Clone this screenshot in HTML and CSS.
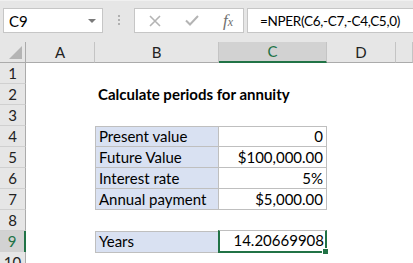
FILE: index.html
```html
<!DOCTYPE html>
<html lang="en">
<head>
  <meta charset="UTF-8" />
  <title>Calculate periods for annuity</title>
  <link rel="stylesheet" href="styles.css">
</head>
<body>
  <div class="app">
    <div class="toolbar">
      <div class="namebox">
        <span>C9</span>
        <span class="caret"></span>
      </div>
      <div class="grip"><i></i><i></i><i></i></div>
      <div class="fxbox">
        <svg class="icon" width="12" height="12" viewBox="0 0 12 12">
          <path d="M1 1 L11 11 M11 1 L1 11" stroke="#b4b4b4" stroke-width="1.6" fill="none"/>
        </svg>
        <svg class="icon" width="14" height="11" viewBox="0 0 14 11">
          <path d="M1 5.5 L5 9.5 L13 1" stroke="#b4b4b4" stroke-width="2" fill="none"/>
        </svg>
        <span class="fx">f<sub>x</sub></span>
      </div>
      <div class="formula">=NPER(C6,-C7,-C4,C5,0)</div>
    </div>

    <div class="sheet">
      <div class="row head">
        <div class="corner"><span class="tri"></span></div>
        <div class="colhead">A</div>
        <div class="colhead">B</div>
        <div class="colhead active">C</div>
        <div class="colhead">D</div>
        <div class="colhead"></div>
      </div>
      <div class="row">
        <div class="rowhead">1</div>
        <div></div><div></div><div></div><div></div><div></div>
      </div>
      <div class="row">
        <div class="rowhead">2</div>
        <div></div>
        <div class="cell title">Calculate periods for annuity</div>
        <div></div><div></div><div></div>
      </div>
      <div class="row">
        <div class="rowhead">3</div>
        <div></div><div></div><div></div><div></div><div></div>
      </div>
      <div class="row">
        <div class="rowhead">4</div>
        <div></div>
        <div class="cell label top">Present value</div>
        <div class="cell value top">0</div>
        <div></div><div></div>
      </div>
      <div class="row">
        <div class="rowhead">5</div>
        <div></div>
        <div class="cell label">Future Value</div>
        <div class="cell value">$100,000.00</div>
        <div></div><div></div>
      </div>
      <div class="row">
        <div class="rowhead">6</div>
        <div></div>
        <div class="cell label">Interest rate</div>
        <div class="cell value">5%</div>
        <div></div><div></div>
      </div>
      <div class="row">
        <div class="rowhead">7</div>
        <div></div>
        <div class="cell label">Annual payment</div>
        <div class="cell value">$5,000.00</div>
        <div></div><div></div>
      </div>
      <div class="row">
        <div class="rowhead">8</div>
        <div></div><div></div><div></div><div></div><div></div>
      </div>
      <div class="row">
        <div class="rowhead active">9</div>
        <div></div>
        <div class="cell label top">Years</div>
        <div class="cell value top selected">14.20669908<span class="handle"></span></div>
        <div></div><div></div>
      </div>
      <div class="row">
        <div class="rowhead">10</div>
        <div></div><div></div><div></div><div></div><div></div>
      </div>
    </div>
  </div>
</body>
</html>
```

FILE: styles.css
```css
body {
  margin: 0;
  font-family: 'Lato', 'Open Sans', sans-serif;
  font-size: 15px;
  color: #000;
  background: #fff;
  overflow: hidden;
}

.app {
  width: 413px;
  height: 263px;
  overflow: hidden;
}

/* formula bar */
.toolbar {
  height: 42px;
  background: #e6e6e6;
  display: flex;
  align-items: flex-start;
  padding: 8px 0 0 3px;
  box-sizing: border-box;
  border-top: 1px solid #f0f0f0;
}

.namebox,
.fxbox,
.formula {
  height: 25px;
  background: #fff;
  border: 1px solid #c6c6c6;
  box-sizing: border-box;
  display: flex;
  align-items: center;
}

.namebox {
  width: 100px;
  padding: 0 6px 0 5px;
  justify-content: space-between;
  margin-top: -1px;
}

.caret {
  width: 0;
  height: 0;
  border-left: 4px solid transparent;
  border-right: 4px solid transparent;
  border-top: 4px solid #7a7a7a;
}

.grip {
  width: 31px;
  display: flex;
  flex-direction: column;
  align-items: center;
  gap: 2px;
  padding-top: 6px;
}

.grip i {
  width: 2px;
  height: 2px;
  background: #b0b0b0;
}

.fxbox {
  width: 110px;
  padding: 0 10px 0 14px;
  justify-content: space-between;
  margin-top: -1px;
}

.fx {
  font-family: 'Liberation Serif', serif;
  font-style: italic;
  font-size: 17px;
  color: #707070;
}

.fx sub {
  font-size: 12px;
  vertical-align: 0;
}

.formula {
  flex: 1;
  margin-left: 3px;
  margin-right: -20px;
  padding-left: 12px;
  margin-top: -1px;
  white-space: nowrap;
  overflow: hidden;
  font-size: 13.5px;
  letter-spacing: -0.3px;
}

/* grid */
.row {
  display: grid;
  grid-template-columns: 26px 69px 124px 108px 69px 1fr;
  height: 21px;
}

.head {
  background: #e6e6e6;
}

.corner {
  border-right: 1px solid #ababab;
  border-bottom: 1px solid #ababab;
  position: relative;
}

.tri {
  position: absolute;
  right: 3px;
  bottom: 3px;
  width: 0;
  height: 0;
  border-left: 13px solid transparent;
  border-bottom: 13px solid #b4b4b4;
}

.colhead {
  border-right: 1px solid #c4c4c4;
  border-bottom: 1px solid #ababab;
  text-align: center;
  line-height: 20px;
  color: #222;
}

.colhead.active {
  background: #d2d2d2;
  color: #217346;
  border-bottom: 2px solid #217346;
  line-height: 19px;
}

.rowhead {
  background: #e6e6e6;
  border-right: 1px solid #ababab;
  border-bottom: 1px solid #d0d0d0;
  text-align: center;
  line-height: 20px;
  color: #222;
}

.rowhead.active {
  background: #d2d2d2;
  color: #217346;
  border-right: 2px solid #217346;
}

.cell {
  white-space: nowrap;
  line-height: 20px;
  padding: 0 3px;
  box-sizing: border-box;
  border-bottom: 1px solid #bfbfbf;
  border-right: 1px solid #bfbfbf;
}

.cell.top {
  border-top: 1px solid #bfbfbf;
  line-height: 19px;
}

.title {
  border: none;
  font-weight: bold;
  overflow: visible;
}

.label {
  background: #d9e1f2;
  border-left: 1px solid #bfbfbf;
}

.value {
  text-align: right;
}

.selected {
  position: relative;
  border: 2px solid #217346;
  margin: -1px 0 0 -1px;
  height: 23px;
  line-height: 19px;
  padding-right: 1px;
}

.handle {
  position: absolute;
  right: -4px;
  bottom: -4px;
  width: 5px;
  height: 5px;
  background: #217346;
  border: 1px solid #fff;
}
```
